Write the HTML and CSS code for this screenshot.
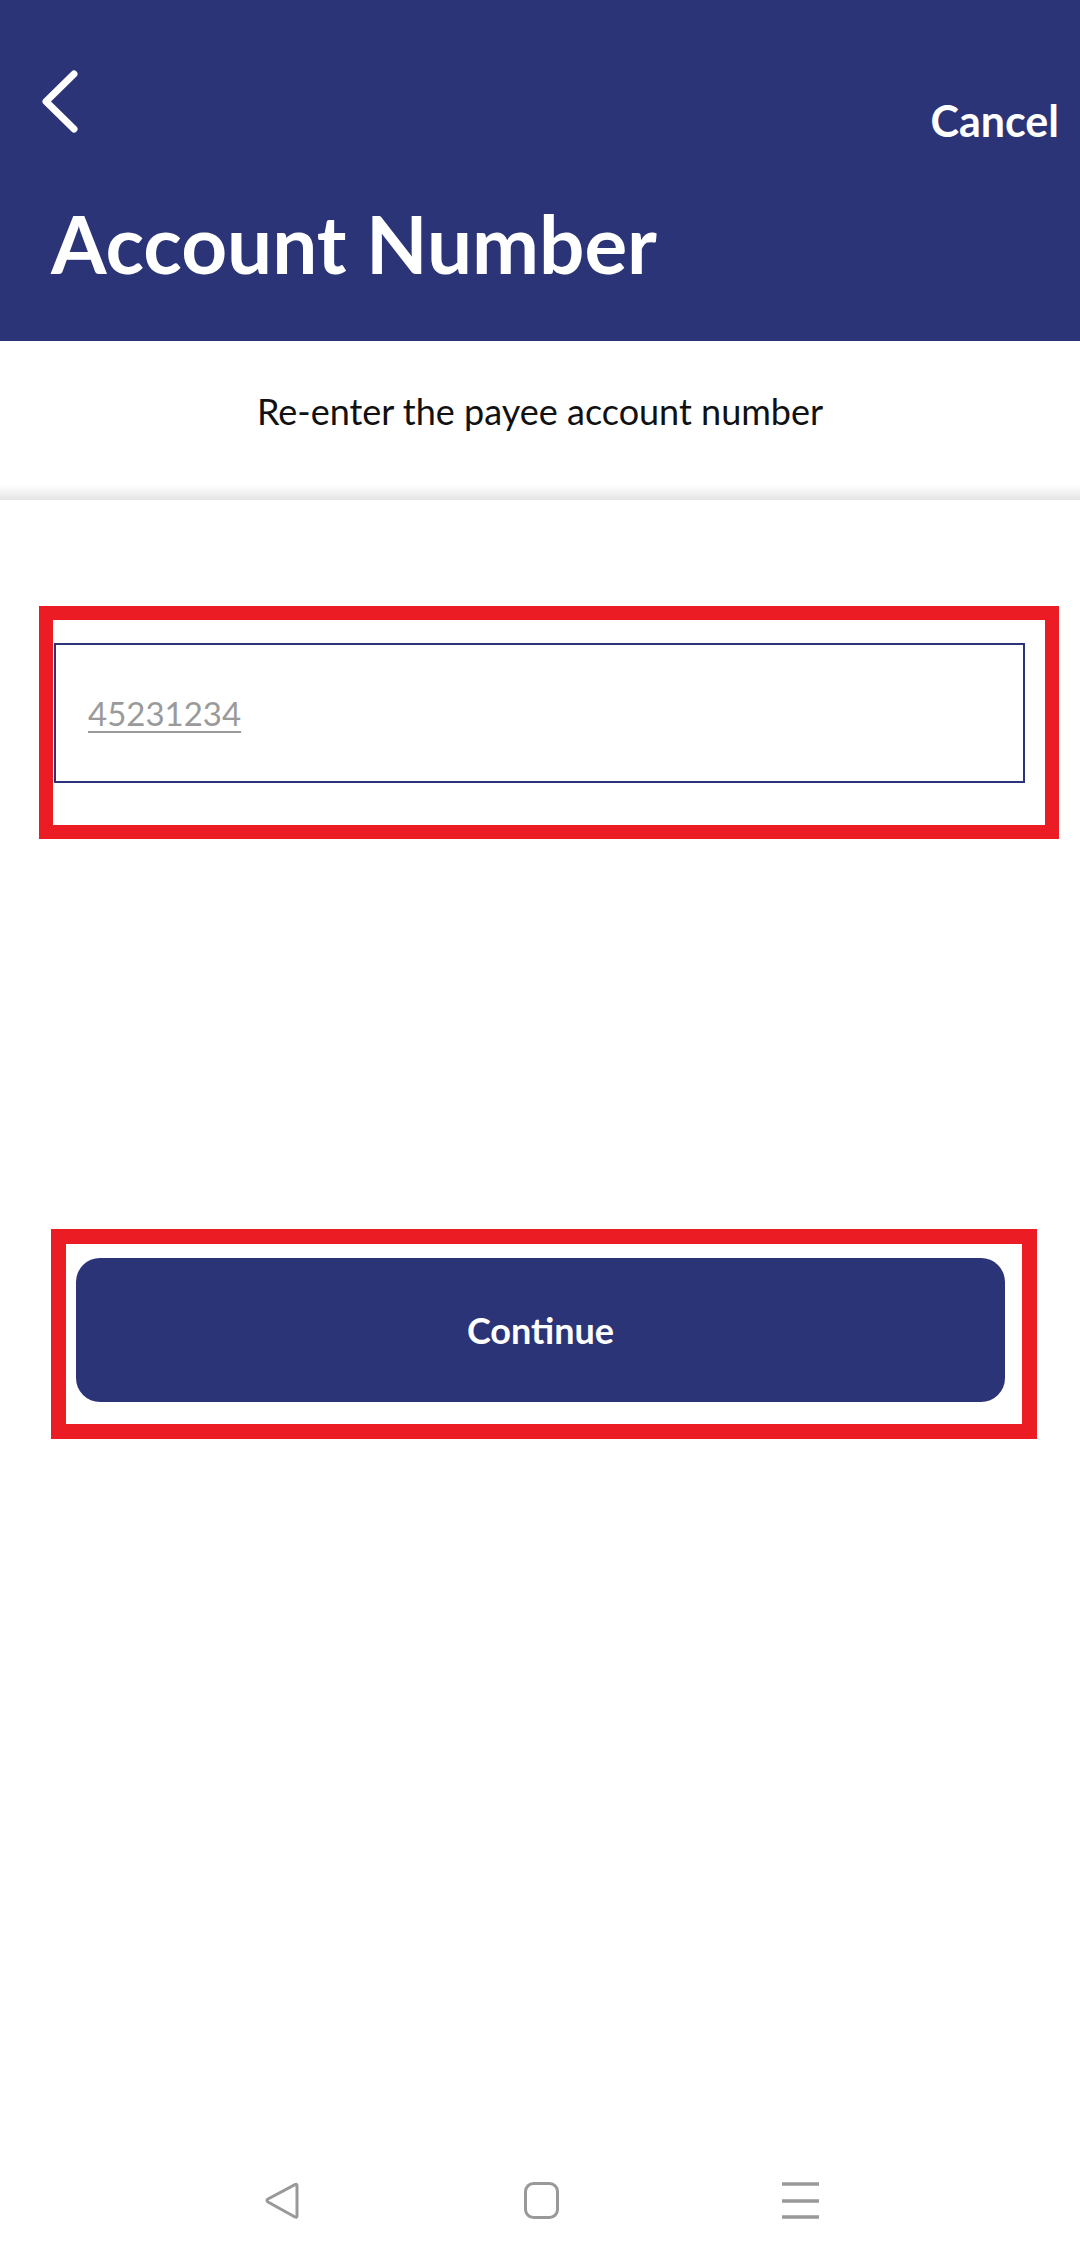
FILE: index.html
```html
<!DOCTYPE html>
<html lang="en">
<head>
<meta charset="utf-8">
<title>Account Number</title>
<link rel="stylesheet" href="styles.css">
</head>
<body>
<div class="screen">
  <header class="header">
    <div class="topbar">
      <svg class="back" width="44" height="68" viewBox="0 0 44 68" aria-hidden="true">
        <path d="M34 6 L6 33.5 L34 61" fill="none" stroke="#fff" stroke-width="7" stroke-linecap="round" stroke-linejoin="round"/>
      </svg>
      <span class="cancel">Cancel</span>
    </div>
    <h1 class="title">Account Number</h1>
  </header>

  <section class="intro">
    <p class="subtitle">Re-enter the payee account number</p>
  </section>

  <main class="content">
    <div class="highlight highlight-input">
      <div class="field"><span class="field-value">45231234</span></div>
    </div>
    <div class="highlight highlight-button">
      <button class="continue">Continue</button>
    </div>
  </main>

  <nav class="navbar">
    <svg class="nav-icon" width="37" height="37" viewBox="0 0 37 37" aria-hidden="true">
      <path d="M33 3.5 Q33 1.5 31 2.6 L4 17 Q2 18.5 4 20 L31 35 Q33 36 33 34 Z" fill="none" stroke="#999" stroke-width="3" stroke-linejoin="round"/>
    </svg>
    <svg class="nav-icon" width="37" height="37" viewBox="0 0 37 37" aria-hidden="true">
      <rect x="2.5" y="1.5" width="32" height="34" rx="8" fill="none" stroke="#999" stroke-width="3"/>
    </svg>
    <svg class="nav-icon" width="37" height="37" viewBox="0 0 37 37" aria-hidden="true">
      <path d="M0 2 H37 M0 19 H37 M0 35 H37" stroke="#999" stroke-width="3.4"/>
    </svg>
  </nav>
</div>
</body>
</html>
```

FILE: styles.css
```css
* {
  box-sizing: border-box;
}

html, body {
  margin: 0;
  padding: 0;
  background: #ffffff;
}

body {
  font-family: Lato, "Noto Sans", sans-serif;
}

.screen {
  width: 1080px;
  height: 2266px;
  display: flex;
  flex-direction: column;
  background: #ffffff;
  overflow: hidden;
}

.header {
  height: 341px;
  background: #2b3476;
  color: #ffffff;
  display: flex;
  flex-direction: column;
}

.topbar {
  display: flex;
  justify-content: space-between;
  align-items: flex-start;
  padding: 68px 21px 0 40px;
  height: 136px;
}

.back {
  display: block;
}

.cancel {
  font-size: 43px;
  font-weight: 700;
  line-height: 1;
  margin-top: 31px;
}

.title {
  margin: 67px 0 0 0;
  padding-left: 51px;
  font-size: 80px;
  font-weight: 700;
  line-height: 1;
}

.intro {
  height: 159px;
  padding-top: 52px;
  background: linear-gradient(to bottom, #ffffff 0, #ffffff calc(100% - 16px), #f6f6f6 calc(100% - 10px), #e4e4e4 100%);
}

.subtitle {
  margin: 0;
  text-align: center;
  font-size: 36px;
  line-height: 1;
  color: #111111;
}

.content {
  display: flex;
  flex-direction: column;
  padding-top: 106px;
}

.highlight {
  border: 14px solid #ec1c24;
}

.highlight-input {
  margin-left: 39px;
  width: 1020px;
  padding: 23px 20px 42px 1px;
}

.field {
  height: 140px;
  border: 2px solid #2b3476;
  display: flex;
  align-items: center;
  padding-left: 32px;
}

.field-value {
  font-size: 33px;
  line-height: 1;
  color: #9a9a9a;
  text-decoration: underline;
  text-underline-offset: 5px;
  text-decoration-thickness: 2px;
}

.highlight-button {
  margin-top: 390px;
  margin-left: 51px;
  width: 986px;
  border-width: 15px;
  padding: 14px 17px 22px 10px;
}

.continue {
  display: block;
  width: 100%;
  height: 144px;
  border: none;
  border-radius: 24px;
  background: #2b3476;
  color: #ffffff;
  font-family: Lato, "Noto Sans", sans-serif;
  font-size: 36px;
  font-weight: 700;
  line-height: 1;
}

.navbar {
  margin-top: auto;
  height: 132px;
  display: flex;
  justify-content: center;
  align-items: center;
  gap: 222px;
  padding-left: 2px;
}

.nav-icon {
  display: block;
}
```
